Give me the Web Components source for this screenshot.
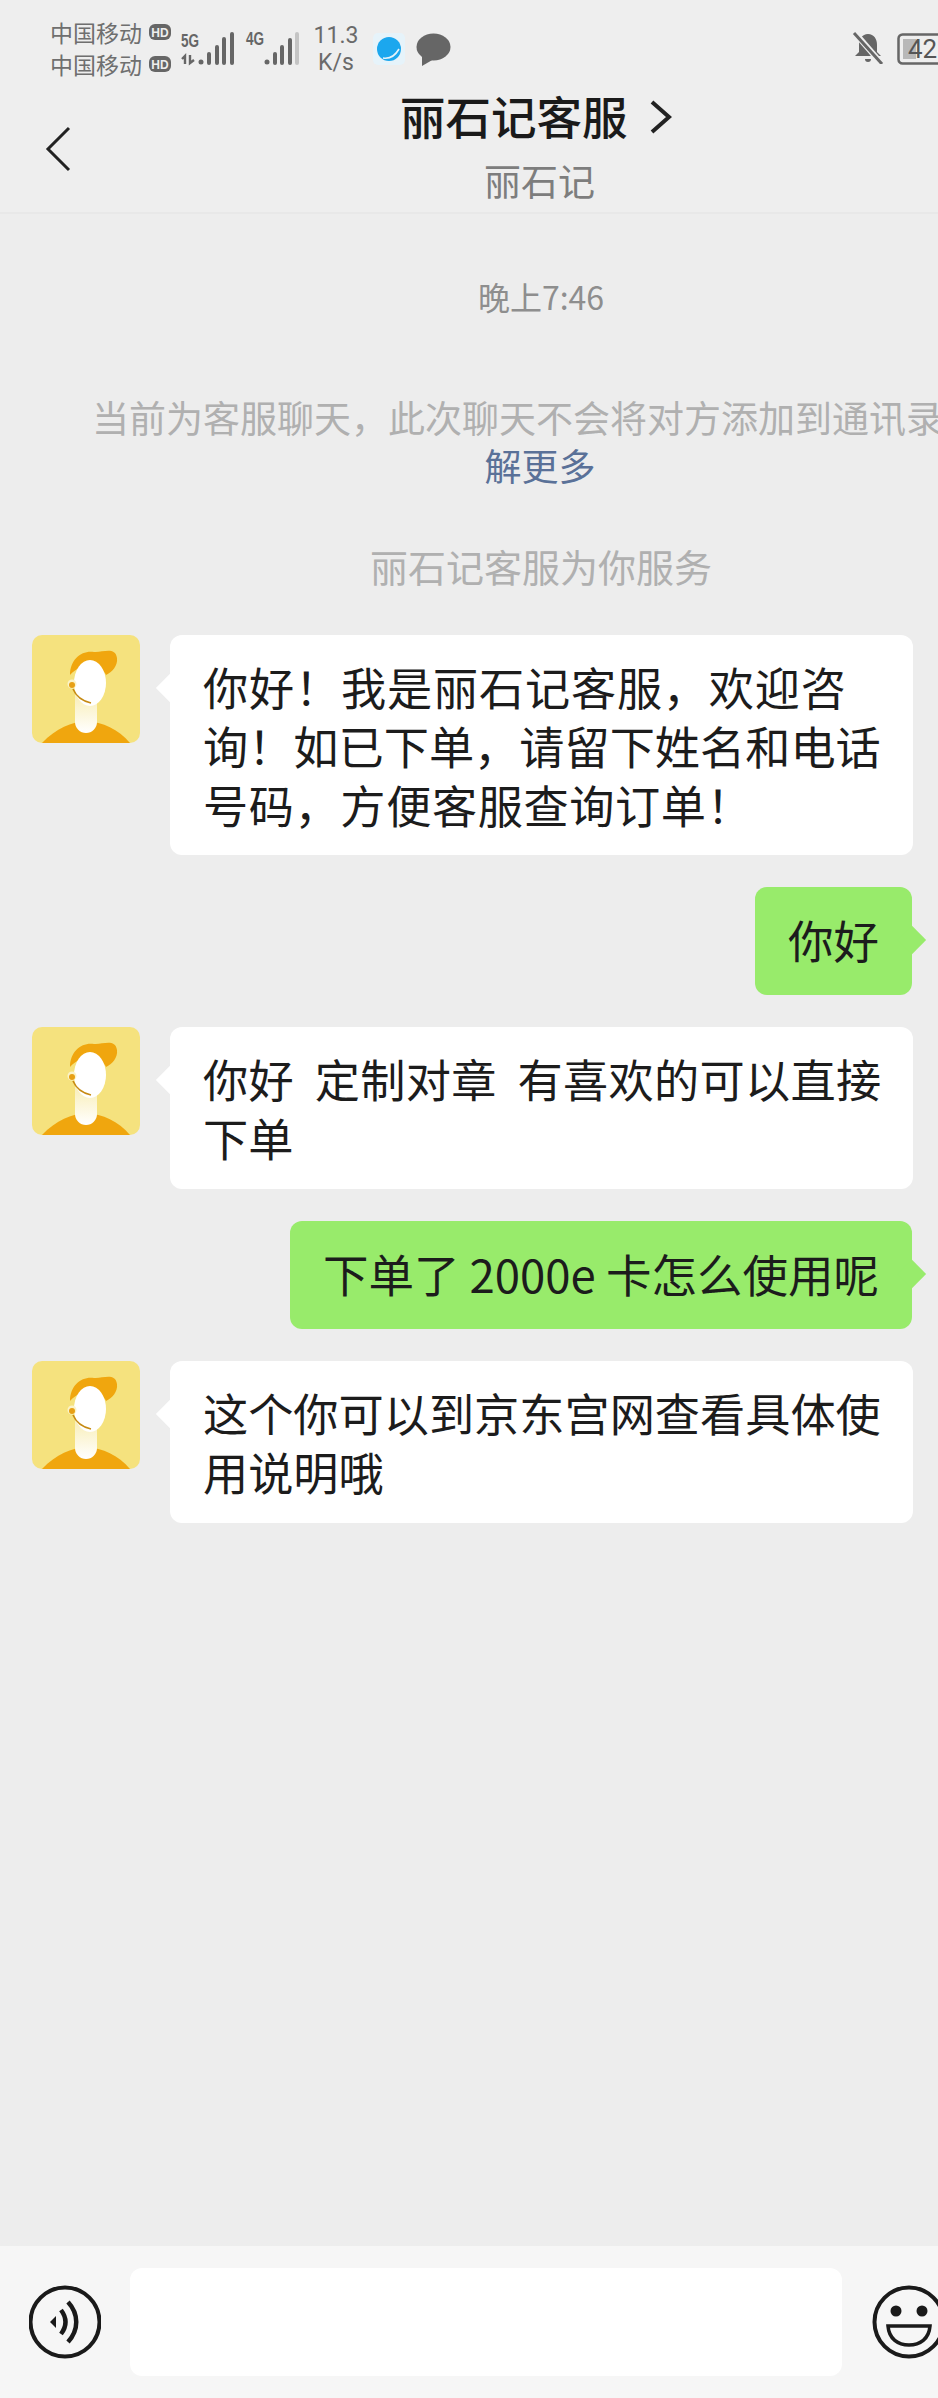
<!DOCTYPE html>
<html lang="zh">
<head>
<meta charset="utf-8">
<title>丽石记客服</title>
<style>
  html, body { margin: 0; padding: 0; background: #ededed; }
  body { width: 938px; height: 2398px; overflow: hidden; font-family: "Noto Sans CJK SC", "Noto Sans", sans-serif; }
</style>
</head>
<body>
<chat-page>
  <status-bar slot="top"></status-bar>
  <chat-header slot="top" title-text="丽石记客服" sub-text="丽石记"></chat-header>

  <chat-tip kind="time">晚上7:46</chat-tip>
  <chat-notice link="解更多">当前为客服聊天，此次聊天不会将对方添加到通讯录</chat-notice>
  <chat-tip kind="service">丽石记客服为你服务</chat-tip>

  <chat-bubble><span style="letter-spacing:.8px">你好！我是丽石记客服，欢迎咨</span><br>询！如已下单，请留下姓名和电话<br><span style="letter-spacing:.6px">号码，方便客服查询订单！</span></chat-bubble>
  <chat-bubble mine>你好</chat-bubble>
  <chat-bubble lines="2"><span style="letter-spacing:.3px">你好&nbsp;&nbsp;定制对章&nbsp;&nbsp;有喜欢的可以直接</span><br>下单</chat-bubble>
  <chat-bubble mine>下单了 2000e 卡怎么使用呢</chat-bubble>
  <chat-bubble lines="2">这个你可以到京东宫网查看具体使<br>用说明哦</chat-bubble>

  <input-bar slot="bottom"></input-bar>
</chat-page>

<script>
const FONT = '"Noto Sans CJK SC", "Noto Sans", sans-serif'

customElements.define('chat-page',
  class ChatPage extends HTMLElement {
    constructor() {
      super()
      this.attachShadow({ mode: "open" })
      this.shadowRoot.innerHTML = `
        <style>
          :host { display: flex; flex-direction: column; width: 938px; height: 2398px; overflow: hidden; background: #ededed; }
          .body { flex: 1; display: flex; flex-direction: column; min-height: 0; }
        </style>
        <slot name="top"></slot>
        <div class="body"><slot></slot></div>
        <slot name="bottom"></slot>`
    }
  }
)

customElements.define('status-bar',
  class StatusBar extends HTMLElement {
    constructor() {
      super()
      this.attachShadow({ mode: "open" })
      const hd = `<svg class="hd" width="22" height="16" viewBox="0 0 22 16"><rect width="22" height="16" rx="6" fill="#666"/><text x="11" y="12.5" font-size="12" font-weight="700" fill="#eee" text-anchor="middle" font-family="Liberation Sans, sans-serif">HD</text></svg>`
      this.shadowRoot.innerHTML = `
        <style>
          :host { display: flex; height: 90px; box-sizing: border-box; padding: 16px 0 0 50px; background: #eeeeee; color: #6f6f6f; overflow: hidden; font-family: ${FONT}; }
          .carrier { flex: none; width: 130px; font-size: 23px; line-height: 32px; }
          .carrier div { display: flex; align-items: center; gap: 7px; white-space: nowrap; }
          .signal { margin-top: 14px; flex: none; }
          .speed { flex: none; width: 58px; margin-left: 7px; margin-top: 6px; text-align: center; font: 23px/27px Roboto, sans-serif; color: #6a6a6a; }
          .app { margin: 17px 0 0 8px; flex: none; }
          .msg { margin: 17px 0 0 11px; flex: none; }
          .bell { margin: 16px 0 0 auto; flex: none; }
          .battery { margin: 17px -19px 0 13px; flex: none; }
        </style>
        <div class="carrier"><div>中国移动${hd}</div><div>中国移动${hd}</div></div>
        <svg class="signal" width="120" height="38" viewBox="180 30 120 38" fill="#666">
          <text x="181" y="47" font-size="18" font-weight="700" font-family="Liberation Sans Narrow, Liberation Sans, sans-serif" textLength="18" lengthAdjust="spacingAndGlyphs">5G</text>
          <path d="M185 64v-8l-3 3M190 55v8l4-3" fill="none" stroke="#666" stroke-width="2.4"/>
          <circle cx="201" cy="62" r="2.5"/>
          <rect x="207" y="52" width="4" height="13" rx="2"/><rect x="215" y="45" width="4" height="20" rx="2"/><rect x="222" y="37" width="4" height="28" rx="2"/><rect x="230" y="32" width="4" height="33" rx="2"/>
          <text x="246" y="45" font-size="18" font-weight="700" font-family="Liberation Sans Narrow, Liberation Sans, sans-serif" textLength="18" lengthAdjust="spacingAndGlyphs">4G</text>
          <circle cx="267" cy="62" r="2.5"/>
          <rect x="273" y="52" width="4" height="13" rx="2"/><rect x="280" y="45" width="4" height="20" rx="2"/><rect x="288" y="38" width="4" height="27" rx="2"/><rect x="295" y="32" width="4" height="33" rx="2" fill="#c4c4c4"/>
        </svg>
        <div class="speed">11.3<br>K/s</div>
        <svg class="app" width="32" height="32" viewBox="0 0 32 32">
          <rect width="32" height="32" rx="5" fill="#e6f3fa"/>
          <circle cx="16" cy="16" r="12" fill="#1ba7ee"/>
          <path d="M10 25c6 1 12-2 16-9" fill="none" stroke="#e6f3fa" stroke-width="1.6"/>
        </svg>
        <svg class="msg" width="35" height="33" viewBox="0 0 35 33" fill="#666">
          <ellipse cx="17.5" cy="14" rx="17" ry="13.5"/><path d="M6 22l0 11 12-7z"/>
        </svg>
        <svg class="bell" width="32" height="32" viewBox="0 0 32 32">
          <path d="M16 2c6 0 9 5 9 11v7l4 4H3l4-4v-7c0-6 3-11 9-11z" fill="#666"/>
          <path d="M13 27h6a3 3 0 0 1-6 0z" fill="#666"/>
          <path d="M3 1l26 30" stroke="#eee" stroke-width="6"/><path d="M2 1l28 31" stroke="#666" stroke-width="3"/>
        </svg>
        <svg class="battery" width="60" height="32" viewBox="0 0 60 32">
          <rect x="1.5" y="1.5" width="57" height="29" rx="4" fill="none" stroke="#666" stroke-width="2.5"/>
          <rect x="6" y="6" width="13" height="20" fill="#b8b8b8"/>
          <text x="11" y="24.5" font-size="26" font-family="Roboto, sans-serif" fill="#555">42</text>
        </svg>`
    }
  }
)

customElements.define('chat-header',
  class ChatHeader extends HTMLElement {
    constructor() {
      super()
      this.attachShadow({ mode: "open" })
      this.shadowRoot.innerHTML = `
        <style>
          :host { display: flex; align-items: flex-start; height: 124px; box-sizing: border-box; background: #eeeeee; border-bottom: 2px solid #e8e8e8; font-family: ${FONT}; }
          .back { flex: none; margin: 36px 0 0 45px; }
          .titles { flex: none; width: 282px; margin-left: 329px; display: flex; flex-direction: column; margin-top: -3px; }
          .name { display: flex; align-items: center; gap: 22px; font-size: 45.5px; line-height: 56px; font-weight: 500; color: #1a1a1a; white-space: nowrap; }
          .name svg { margin-top: 3px; }
          .sub { margin-top: 14px; padding-right: 3px; text-align: center; font-size: 37px; line-height: 46px; color: #7d7d7d; }
        </style>
        <svg class="back" width="26" height="46" viewBox="0 0 26 46"><path d="M24 2L3 23l21 21" fill="none" stroke="#222" stroke-width="3"/></svg>
        <div class="titles">
          <div class="name"><span>${this.getAttribute('title-text')}</span>
            <svg width="22" height="34" viewBox="0 0 22 34"><path d="M2 2l17 15L2 32" fill="none" stroke="#222" stroke-width="4"/></svg>
          </div>
          <div class="sub">${this.getAttribute('sub-text')}</div>
        </div>`
    }
  }
)

// the column centres on x=541, the screenshot is cut off on the right
customElements.define('chat-tip',
  class ChatTip extends HTMLElement {
    constructor() {
      super()
      this.attachShadow({ mode: "open" })
      this.shadowRoot.innerHTML = `
        <style>
          :host { display: block; box-sizing: border-box; width: 938px; padding-left: 144px; text-align: center; font-family: ${FONT}; }
          :host([kind="time"]) { margin-top: 62px; font-size: 32px; line-height: 40px; color: #8e8e8e; }
          :host([kind="service"]) { margin-top: 54px; margin-bottom: 46px; font-size: 38px; line-height: 46px; color: #b0b0b0; }
        </style>
        <slot></slot>`
    }
  }
)

customElements.define('chat-notice',
  class ChatNotice extends HTMLElement {
    constructor() {
      super()
      this.attachShadow({ mode: "open" })
      this.shadowRoot.innerHTML = `
        <style>
          :host { display: block; margin-top: 77px; width: 938px; overflow: hidden; font-size: 37px; line-height: 48px; color: #b0b0b0; font-family: ${FONT}; }
          .line { padding-left: 92px; white-space: nowrap; }
          .link { box-sizing: border-box; padding-left: 142px; text-align: center; color: #5a7198; }
        </style>
        <div class="line"><slot></slot></div>
        <div class="link">${this.getAttribute('link')}</div>`
    }
  }
)

customElements.define('agent-avatar',
  class AgentAvatar extends HTMLElement {
    constructor() {
      super()
      this.attachShadow({ mode: "open" })
      this.shadowRoot.innerHTML = `
        <style>
          :host { display: block; width: 108px; height: 108px; flex: none; }
          svg { display: block; }
        </style>
        <svg width="108" height="108" viewBox="0 0 108 108">
          <defs><linearGradient id="neck" x1="0" y1="0" x2="0" y2="1"><stop offset="0" stop-color="#f7eaa6"/><stop offset="1" stop-color="#fff"/></linearGradient></defs>
          <rect width="108" height="108" rx="10" fill="#f5e27e"/>
          <path d="M10 108C24 93 40 87 54 86c17 1 32 8 44 22z" fill="#f0a60e"/>
          <path d="M43 50h22v37a11 11 0 0 1-22 0z" fill="url(#neck)"/>
          <path d="M38 40C38 24 50 15 62 17c8 1 21-6 23 6 1 8-5 14-11 17C70 30 50 26 38 40z" fill="#f0a60e"/>
          <ellipse cx="58" cy="48" rx="16" ry="23" fill="#fff"/>
          <circle cx="40" cy="49" r="4.5" fill="#fbf3c8"/>
          <circle cx="40" cy="50" r="3" fill="#e7a015"/>
          <path d="M41 54c3 7 9 12 18 14" fill="none" stroke="#c68a12" stroke-width="1.6"/>
        </svg>`
    }
  }
)

customElements.define('chat-bubble',
  class ChatBubble extends HTMLElement {
    constructor() {
      super()
      this.attachShadow({ mode: "open" })
      const mine = this.hasAttribute('mine')
      this.shadowRoot.innerHTML = `
        <style>
          :host { display: flex; gap: 30px; padding: 0 25px 0 32px; margin-bottom: 32px; font-family: ${FONT}; }
          :host([mine]) { justify-content: flex-end; padding-right: 26px; }
          .bubble { position: relative; box-sizing: border-box; min-width: 0; min-height: 108px; padding: 22px 33px 21px; border-radius: 12px; background: #fff; color: #1c1c1c; font-size: 45.2px; line-height: 59px; white-space: nowrap; }
          :host([lines="2"]) .bubble { padding-bottom: 22px; }
          :host(:not([mine])) .bubble { flex: 1; }
          :host([mine]) .bubble { background: #98eb6b; padding: 23px 33px 26px; font-size: 45.5px; }
          .bubble::before { content: ""; position: absolute; top: 43px; left: -10px; width: 20px; height: 20px; background: inherit; transform: rotate(45deg); }
          :host([mine]) .bubble::before { left: auto; right: -10px; }
        </style>
        ${mine ? '' : '<agent-avatar></agent-avatar>'}
        <div class="bubble"><slot></slot></div>`
    }
  }
)

customElements.define('input-bar',
  class InputBar extends HTMLElement {
    constructor() {
      super()
      this.attachShadow({ mode: "open" })
      this.shadowRoot.innerHTML = `
        <style>
          :host { display: flex; align-items: center; height: 152px; box-sizing: border-box; padding: 0 0 0 29px; background: #f6f6f6; width: 938px; overflow: hidden; }
          svg { flex: none; }
          .field { flex: none; width: 712px; height: 108px; margin: 0 30px 0 29px; border-radius: 12px; background: #fff; }
        </style>
        <svg width="72" height="74" viewBox="0 0 72 74" fill="none" stroke="#1a1a1a" stroke-width="4">
          <circle cx="36" cy="37" r="34.5"/>
          <path d="M21 37l6-6v12z" fill="#1a1a1a" stroke="none"/>
          <path d="M32 25c6 8 6 16 0 24" stroke-width="4.5"/>
          <path d="M39 17c11 12 11 28 0 40" stroke-width="4.5"/>
        </svg>
        <div class="field"></div>
        <svg width="72" height="74" viewBox="0 0 72 74" fill="none" stroke="#1a1a1a" stroke-width="4" style="overflow:visible">
          <circle cx="37" cy="37" r="34.5"/>
          <circle cx="24" cy="26" r="5.5" fill="#1a1a1a" stroke="none"/>
          <circle cx="50" cy="26" r="5.5" fill="#1a1a1a" stroke="none"/>
          <path d="M16 41h42c-1 13-10 19-21 19s-20-6-21-19z" stroke-width="3.5"/>
        </svg>`
    }
  }
)
</script>
</body>
</html>
